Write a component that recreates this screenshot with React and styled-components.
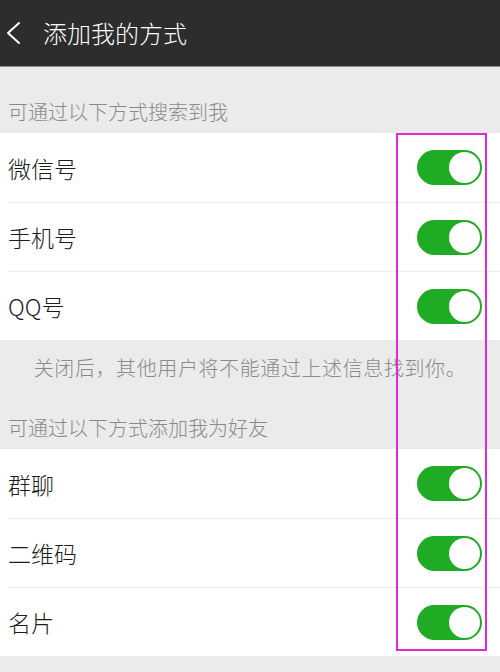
import styled, { createGlobalStyle } from "styled-components"

const GlobalStyle = createGlobalStyle`
  html, body {
    margin: 0;
    padding: 0;
    background: #ebebeb;
  }
  body {
    font-family: "Noto Sans CJK SC", "Noto Sans", "Liberation Sans", sans-serif;
  }
`

const searchItems = ["微信号", "手机号", "QQ号"]
const addItems = ["群聊", "二维码", "名片"]

const App = () => {
  return (
    <>
      <GlobalStyle />
      <Page>
        <Header>
          <BackButton>
            <svg width="16" height="24" viewBox="0 0 16 24">
              <polyline points="13,2 2,12 13,22" fill="none" stroke="#fff" strokeWidth="2" strokeLinecap="round" strokeLinejoin="round" />
            </svg>
          </BackButton>
          <Title>添加我的方式</Title>
        </Header>

        <SectionLabel top={34}>可通过以下方式搜索到我</SectionLabel>
        <Group>
          {searchItems.map((item) => (
            <Row key={item}>
              <RowText>{item}</RowText>
              <Toggle />
            </Row>
          ))}
        </Group>
        <Note>关闭后，其他用户将不能通过上述信息找到你。</Note>

        <SectionLabel top={37}>可通过以下方式添加我为好友</SectionLabel>
        <Group>
          {addItems.map((item) => (
            <Row key={item}>
              <RowText>{item}</RowText>
              <Toggle />
            </Row>
          ))}
        </Group>

        <Highlight />
      </Page>
    </>
  )
}

const Page = styled.div`
  position: relative;
  width: 500px;
  height: 672px;
  overflow: hidden;
  background: #ebebeb;
`
const Header = styled.div`
  height: 67px;
  background: #2d2d2d;
  border-bottom: 1px solid #8a8a8a;
  box-sizing: border-box;
  display: flex;
  align-items: center;
  padding-left: 6px;
`
const BackButton = styled.div`
  width: 20px;
  height: 24px;
  display: flex;
  align-items: center;
  margin-right: 17px;
`
const Title = styled.div`
  color: #ffffff;
  font-size: 24px;
  font-weight: 300;
  line-height: 30px;
`
const SectionLabel = styled.div`
  padding: ${props => props.top}px 8px 10px;
  font-size: 20px;
  font-weight: 300;
  line-height: 22px;
  color: #8a8a8a;
`
const Group = styled.div`
  background: #ffffff;
`
const Row = styled.div`
  height: 69px;
  margin-left: 8px;
  padding-right: 18px;
  display: flex;
  align-items: center;
  justify-content: space-between;
  box-sizing: border-box;
  & + & {
    border-top: 1px solid #ececec;
  }
`
const RowText = styled.div`
  font-size: 23px;
  font-weight: 300;
  color: #1c1c1c;
`
const Toggle = styled.div`
  position: relative;
  width: 65px;
  height: 35px;
  border-radius: 18px;
  background: #1fab24;
  &::after {
    content: "";
    position: absolute;
    right: 2px;
    top: 2px;
    width: 31px;
    height: 31px;
    border-radius: 50%;
    background: #ffffff;
  }
`
const Note = styled.div`
  padding-top: 16px;
  text-align: center;
  font-size: 20px;
  font-weight: 300;
  letter-spacing: 0.6px;
  line-height: 24px;
  color: #8a8a8a;
`
const Highlight = styled.div`
  position: absolute;
  left: 396px;
  top: 133px;
  width: 91px;
  height: 518px;
  border: 2px solid #e028e0;
  box-sizing: border-box;
  pointer-events: none;
`

export default App
